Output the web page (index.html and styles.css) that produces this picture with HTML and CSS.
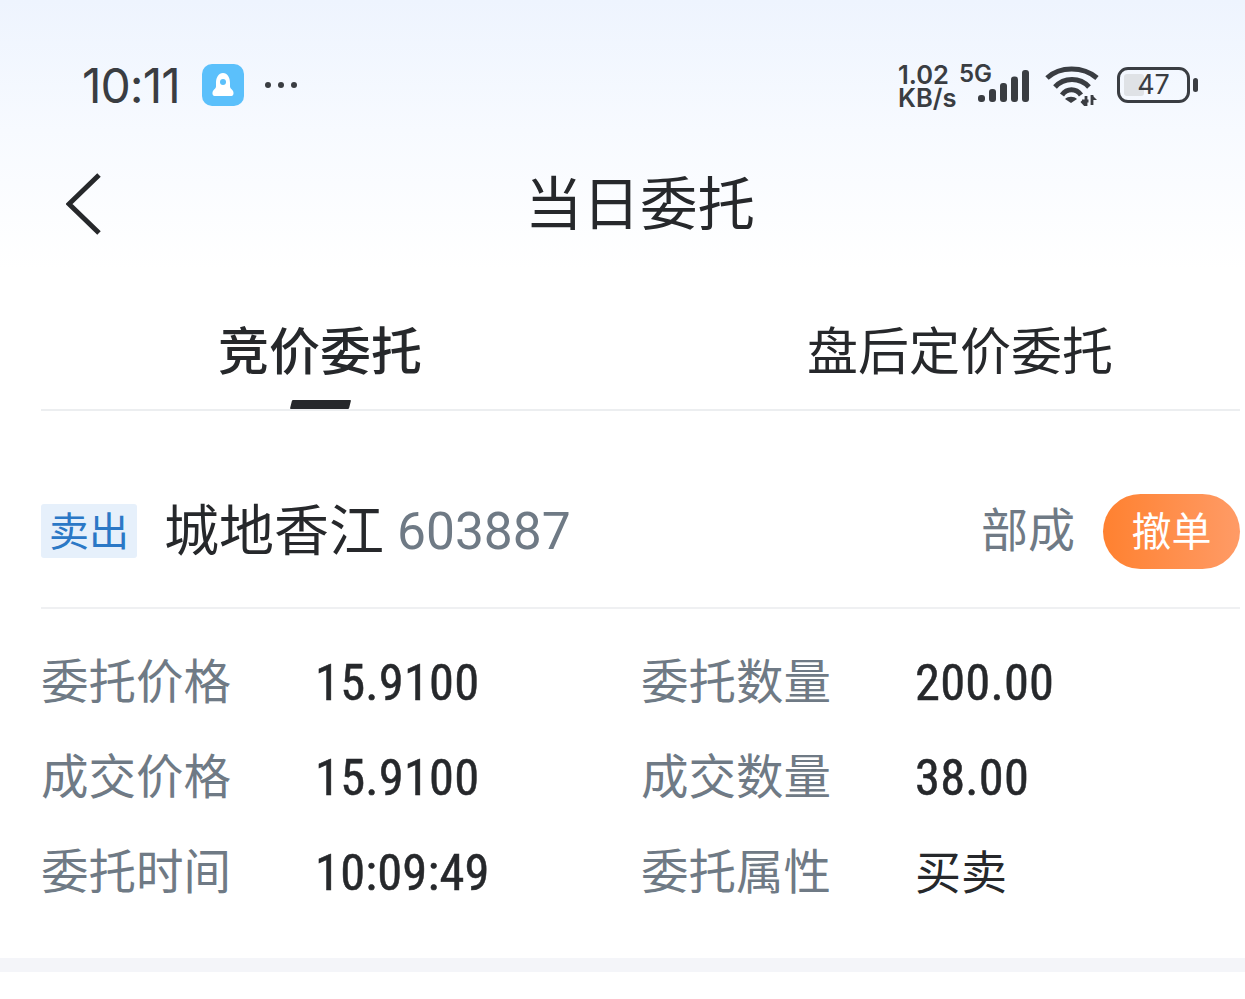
FILE: index.html
```
<!DOCTYPE html>
<html lang="zh">
<head>
<meta charset="utf-8">
<title>当日委托</title>
<link rel="stylesheet" href="styles.css">
</head>
<body>
<div class="page">
  <div class="status">
    <div class="status-left">
      <span class="time">10:11</span>
      <span class="app-icon">
        <svg viewBox="0 0 42 42" width="42" height="42"><path d="M21 9c4.500 0 7 4.500 7 10v3.500c0 1.500 1.300 2.500 2.500 3.800 1.500 1.700 1.500 5.700-1 5.700H12.500c-2.500 0-2.500-4-1-5.700 1.200-1.300 2.500-2.300 2.500-3.800V19c0-5.500 2.500-10 7-10z" fill="#fff"/><circle cx="21" cy="18" r="3" fill="#5bc0fb"/></svg>
      </span>
      <svg class="dots" viewBox="0 0 34 8" width="34" height="8"><circle cx="4" cy="4" r="3" fill="#3a3d42"/><circle cx="17" cy="4" r="3" fill="#3a3d42"/><circle cx="30" cy="4" r="3" fill="#3a3d42"/></svg>
    </div>
    <div class="status-right">
      <span class="speed"><span>1.02</span><span>KB/s</span></span>
      <span class="signal">
        <span class="five-g">5G</span>
        <svg viewBox="0 0 54 32" width="54" height="32"><rect x="1" y="25" width="7" height="7" rx="3" fill="#3a3d42"/><rect x="12" y="19" width="7" height="13" rx="3" fill="#3a3d42"/><rect x="23" y="13" width="7" height="19" rx="3" fill="#3a3d42"/><rect x="34" y="6.500" width="7" height="25.500" rx="3" fill="#3a3d42"/><rect x="45" y="0" width="7" height="32" rx="3" fill="#3a3d42"/></svg>
      </span>
      <svg class="wifi" viewBox="0 0 54 40" width="54" height="40"><g fill="none" stroke="#3a3d42" stroke-width="5"><path d="M2 12C15 0 38 0 52 12"/><path d="M10 21C19 11 35 11 44 21"/><path d="M17 29C22 22 31 22 36 29"/></g><path d="M20 33c3-3 9-3 12 0l-6 4z" fill="#3a3d42"/><path d="M41 30v10M37 35h6.500M41 40l-4.500-5M47 29v10" fill="none" stroke="#3a3d42" stroke-width="2.800"/><path d="M47 29l5 5h-5z" fill="#3a3d42"/></svg>
      <span class="battery">
        <span class="battery-body"><span class="battery-fill"></span><span class="battery-num">47</span></span>
        <span class="battery-cap"></span>
      </span>
    </div>
  </div>

  <header class="nav">
    <svg class="back" viewBox="0 0 36 62" width="36" height="62"><path d="M33 2L3 31l30 29" fill="none" stroke="#26282b" stroke-width="5"/></svg>
    <h1 class="title">当日委托</h1>
  </header>

  <nav class="tabs">
    <div class="tab tab-active">竞价委托</div>
    <div class="tab">盘后定价委托</div>
  </nav>
  <div class="tab-line"><span class="indicator"></span></div>

  <section class="order">
    <div class="order-head">
      <span class="tag">卖出</span>
      <span class="name">城地香江</span>
      <span class="code">603887</span>
      <span class="state">部成</span>
      <span class="cancel">撤单</span>
    </div>
    <div class="fields">
      <div class="field"><span class="label">委托价格</span><span class="value">15.9100</span></div>
      <div class="field"><span class="label">委托数量</span><span class="value">200.00</span></div>
      <div class="field"><span class="label">成交价格</span><span class="value">15.9100</span></div>
      <div class="field"><span class="label">成交数量</span><span class="value">38.00</span></div>
      <div class="field"><span class="label">委托时间</span><span class="value">10:09:49</span></div>
      <div class="field"><span class="label">委托属性</span><span class="value value-cjk">买卖</span></div>
    </div>
  </section>
  <div class="band"></div>
</div>
</body>
</html>
```
FILE: styles.css
```
* { box-sizing: border-box; }
html, body { margin: 0; padding: 0; height: 999px; overflow: hidden; background: #fff; }
body { font-family: "Roboto", "Noto Sans CJK SC", sans-serif; color: #26282b; }
.page {
  width: 1280px;
  height: 999px;
  background: linear-gradient(180deg, #eef4fe 0, #f7faff 130px, #ffffff 270px);
}
.status {
  height: 136px;
  padding: 60px 82px 0 82px;
  display: flex;
  justify-content: space-between;
  align-items: flex-start;
}
.status-left { display: flex; align-items: center; height: 50px; }
.time { font-family: "Inter", sans-serif; font-size: 48px; letter-spacing: -1px; color: #3a3d42; width: 120px; }
.app-icon { width: 42px; height: 42px; border-radius: 10px; background: #5bc0fb; display: block; }
.app-icon svg { display: block; }
.dots { margin-left: 20px; }
.status-right { display: flex; align-items: flex-start; height: 50px; width: 300px; }
.speed { display: flex; flex-direction: column; font-family: "Inter", sans-serif; font-weight: 600; font-size: 25.500px; line-height: 23px; color: #3a3d42; margin-top: 3px; width: 61px; }
.signal { display: block; position: relative; width: 72px; height: 44px; }
.five-g { position: absolute; left: 0; top: 2px; font-family: "Inter", sans-serif; font-weight: 600; font-size: 24px; line-height: 24px; color: #3a3d42; }
.signal svg { position: absolute; left: 18px; top: 10px; }
.wifi { margin-left: 14px; margin-top: 6px; }
.battery { display: flex; align-items: center; margin-left: 18px; margin-top: 7px; height: 36px; }
.battery-body { position: relative; width: 73px; height: 36px; border: 3px solid #3a3d42; border-radius: 11px; display: block; }
.battery-fill { position: absolute; left: 4px; top: 4px; bottom: 4px; width: 20px; background: #dfe2e6; border-radius: 3px; }
.battery-num { position: absolute; left: 0; right: 0; top: 0; bottom: 0; text-align: center; font-family: "Inter", sans-serif; font-size: 27px; line-height: 30px; color: #3a3d42; }
.battery-cap { width: 5px; height: 14px; border-radius: 3px; background: #3a3d42; margin-left: 3px; }

.nav { position: relative; height: 136px; padding-bottom: 8px; display: flex; justify-content: center; align-items: center; }
.back { position: absolute; left: 66px; top: 37px; }
.title { margin: 0; font-family: "Noto Sans CJK SC", sans-serif; font-weight: 400; font-size: 57.500px; line-height: 128px; color: #26282b; }

.tabs { display: grid; grid-template-columns: 1fr 1fr; height: 137px; }
.tab { height: 137px; padding-top: 44px; text-align: center; font-family: "Noto Sans CJK SC", sans-serif; font-size: 51px; line-height: 64px; color: #26282b; }
.tab-active { font-weight: 500; }
.tab-line { position: relative; height: 2px; margin: 0 40px 0 41px; background: #eceef0; }
.indicator { position: absolute; left: 250px; top: -9px; width: 59px; height: 9px; background: #26282b; transform: skewX(-14deg); border-radius: 1px; }

.order { padding: 0 40px 0 41px; }
.order-head { display: flex; align-items: center; height: 198px; padding-top: 44px; border-bottom: 2px solid #eff0f2; }
.tag { width: 96px; height: 54px; background: #e6f0fb; border-radius: 3px; color: #2b78c6; font-family: "Noto Sans CJK SC", sans-serif; font-size: 40px; line-height: 50px; text-align: center; }
.name { margin-left: 27px; padding-bottom: 10px; font-family: "Noto Sans CJK SC", sans-serif; font-size: 55px; color: #26282b; }
.code { margin-left: 13px; font-size: 51.500px; color: #6f7a85; font-family: "Roboto", sans-serif; }
.state { margin-left: auto; padding-bottom: 10px; font-family: "Noto Sans CJK SC", sans-serif; font-size: 47px; color: #6f7a85; }
.cancel { margin-left: 28px; width: 137px; height: 75px; border-radius: 38px; background: linear-gradient(90deg, #ff8130, #ff9b66); color: #fff; font-family: "Noto Sans CJK SC", sans-serif; font-size: 40px; line-height: 71px; text-align: center; }

.fields { display: grid; grid-template-columns: 600px 1fr; grid-auto-rows: 95px; padding-top: 22px; }
.field { display: flex; align-items: center; }
.label { width: 274px; font-family: "Noto Sans CJK SC", sans-serif; font-size: 47.500px; color: #6f7a85; }
.value { padding-top: 8px; font-family: "Roboto", sans-serif; font-weight: 400; font-size: 50.500px; font-stretch: 87%; -webkit-text-stroke: 0.5px #26282b; letter-spacing: 0.2px; color: #26282b; }
.value-cjk { padding-top: 0; font-family: "Noto Sans CJK SC", sans-serif; font-weight: 400; font-size: 46px; -webkit-text-stroke: 0; letter-spacing: 0; }
.band { height: 14px; margin-top: 42px; background: #f4f5f9; }
```
